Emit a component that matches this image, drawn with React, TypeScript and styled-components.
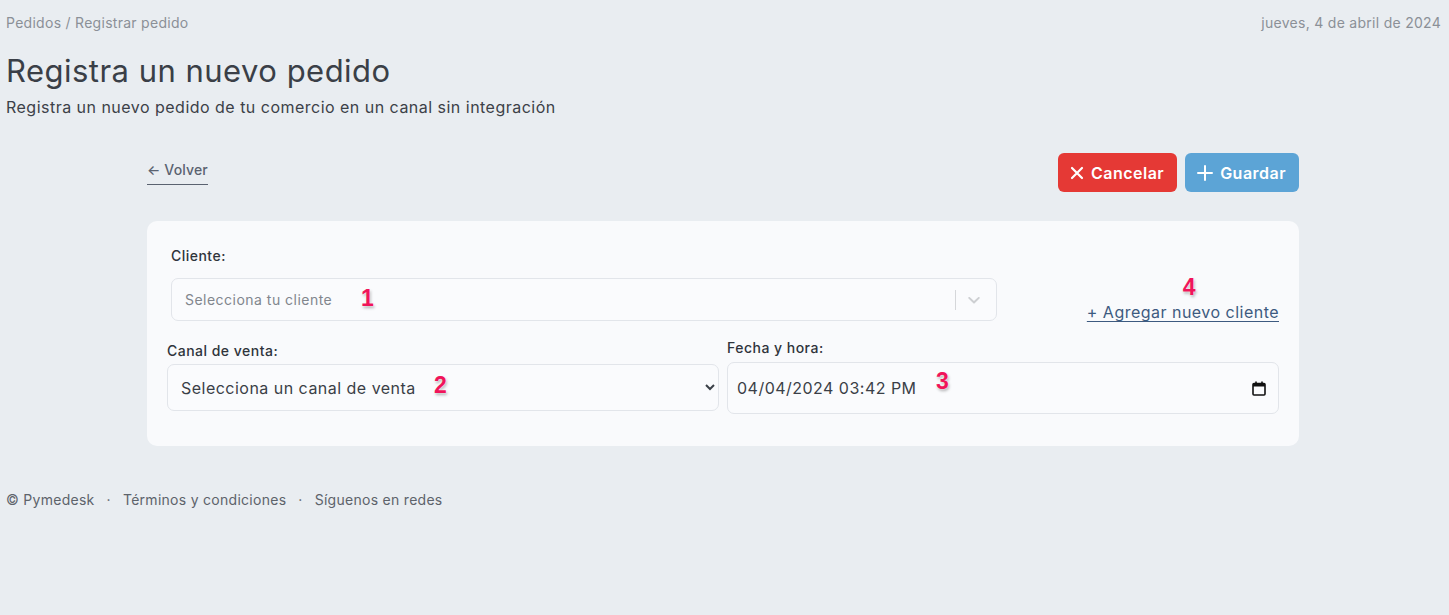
import React from 'react';
import styled, { createGlobalStyle } from 'styled-components';

const GlobalStyle = createGlobalStyle`
  html, body {
    margin: 0;
    padding: 0;
    background: #e9edf1;
    font-family: 'Inter', 'Open Sans', sans-serif;
    letter-spacing: 0.03em;
  }
  * { box-sizing: border-box; }
`;

const Page = styled.div`
  min-height: 615px;
  padding: 14px 8px 0 6px;
`;

const TopBar = styled.div`
  display: flex;
  justify-content: space-between;
  font-size: 14px;
  color: #8b9097;
  line-height: 18px;
  letter-spacing: 0.02em;
`;

const Title = styled.h1`
  margin: 19px 0 0;
  font-size: 31px;
  font-weight: 400;
  color: #3a3f47;
  line-height: 40px;
`;

const Subtitle = styled.p`
  margin: 6px 0 0;
  font-size: 16px;
  color: #3c4148;
  line-height: 20px;
`;

const Content = styled.div`
  width: 1152px;
  margin: 36px 0 0 141px;
`;

const Actions = styled.div`
  display: flex;
  justify-content: space-between;
  align-items: flex-start;
`;

const BackLink = styled.a`
  margin-top: 8px;
  font-size: 14px;
  font-weight: 500;
  color: #5a6270;
  padding-bottom: 5px;
  border-bottom: 1px solid #5a6270;
  text-decoration: none;
  line-height: 18px;
  letter-spacing: 0.01em;
`;

const ButtonGroup = styled.div`
  display: flex;
  gap: 8px;
`;

const Button = styled.button<{ $variant: 'danger' | 'primary' }>`
  display: flex;
  align-items: center;
  gap: 7px;
  height: 39px;
  padding: 0 13px 0 12px;
  border: none;
  border-radius: 6px;
  font-family: inherit;
  letter-spacing: inherit;
  font-size: 16px;
  font-weight: 600;
  color: #fff;
  background: ${p => (p.$variant === 'danger' ? '#e53935' : '#5ca4d6')};
`;

const Card = styled.div`
  margin-top: 29px;
  background: #f9fafc;
  border-radius: 10px;
  padding: 26px 20px 32px;
`;

const ClientRow = styled.div`
  display: flex;
  align-items: flex-end;
  justify-content: space-between;
  padding-left: 4px;
`;

const ClientField = styled.div`
  width: 826px;
`;

const Label = styled.div`
  font-size: 14px;
  font-weight: 500;
  color: #2f343b;
  line-height: 18px;
`;

const Annotated = styled.div`
  position: relative;
`;

const Marker = styled.span<{ $left: number; $top: number }>`
  position: absolute;
  left: ${p => p.$left}px;
  top: ${p => p.$top}px;
  font-family: 'Liberation Sans', Arial, sans-serif;
  font-size: 23px;
  line-height: 23px;
  font-weight: 700;
  letter-spacing: 0;
  color: #f0145a;
  text-shadow: 0 0 2px #fff, 1px 2px 3px rgba(0, 0, 0, 0.3);
  pointer-events: none;
`;

const ClientSelect = styled.div`
  margin-top: 13px;
  height: 43px;
  display: flex;
  align-items: center;
  border: 1px solid #e2e5ea;
  border-radius: 7px;
  background: #fafbfd;
  padding-left: 13px;
`;

const Placeholder = styled.span`
  flex: 1;
  font-size: 14px;
  color: #81868d;
`;

const Separator = styled.span`
  width: 1px;
  height: 20px;
  background: #d5d7da;
`;

const Indicator = styled.span`
  display: flex;
  align-items: center;
  padding: 0 12px 0 8px;
  color: #cdcfd2;
`;

const AddLink = styled.a`
  display: block;
  margin-bottom: -1px;
  font-size: 16px;
  color: #3d5a80;
  text-decoration: underline;
  text-underline-offset: 3px;
  line-height: 20px;
`;

const Grid = styled.div`
  display: grid;
  grid-template-columns: 1fr 1fr;
  gap: 8px;
  margin-top: 18px;
`;

const Field = styled.div<{ $offset: number }>`
  display: flex;
  flex-direction: column;
  margin-top: ${p => p.$offset}px;
`;

const Select = styled.select`
  margin-top: 4px;
  height: 47px;
  width: 100%;
  padding: 0 9px;
  border: 1px solid #e2e5ea;
  border-radius: 7px;
  background: #fafbfd;
  font-family: inherit;
  letter-spacing: inherit;
  font-size: 16px;
  color: #3a3f47;
`;

const DateBox = styled.div`
  margin-top: 5px;
  height: 52px;
  display: flex;
  align-items: center;
  justify-content: space-between;
  padding: 0 12px 0 9px;
  border: 1px solid #e2e5ea;
  border-radius: 7px;
  background: #fafbfd;
  font-size: 16px;
  color: #3a3f47;
`;

const Footer = styled.footer`
  margin-top: 45px;
  display: flex;
  gap: 12px;
  font-size: 14px;
  color: #5d636b;
  letter-spacing: 0.02em;
`;

const Chevron = () => (
  <svg width="20" height="20" viewBox="0 0 20 20" fill="currentColor">
    <path d="M4.5 7.2c.4-.4 1-.4 1.4 0L10 11.1l4.1-3.9c.4-.4 1-.4 1.4 0 .4.4.4 1 0 1.4l-4.8 4.6c-.4.4-1 .4-1.4 0L4.5 8.6c-.4-.4-.4-1 0-1.4z" />
  </svg>
);

const CalendarIcon = () => (
  <svg width="14" height="15" viewBox="0 0 14 15">
    <rect x="1" y="2.5" width="12" height="11.5" rx="1" fill="none" stroke="#111" strokeWidth="1.6" />
    <rect x="1" y="2.5" width="12" height="3" fill="#111" />
    <rect x="3.2" y="0.5" width="1.6" height="3" fill="#111" />
    <rect x="9.2" y="0.5" width="1.6" height="3" fill="#111" />
  </svg>
);

const App: React.FC = () => {
  return (
    <>
      <GlobalStyle />
      <Page>
        <TopBar>
          <span>Pedidos / Registrar pedido</span>
          <span>jueves, 4 de abril de 2024</span>
        </TopBar>
        <Title>Registra un nuevo pedido</Title>
        <Subtitle>Registra un nuevo pedido de tu comercio en un canal sin integración</Subtitle>

        <Content>
          <Actions>
            <BackLink href="#">← Volver</BackLink>
            <ButtonGroup>
              <Button $variant="danger">
                <svg width="14" height="14" viewBox="0 0 14 14" stroke="#fff" strokeWidth="2.2" strokeLinecap="round">
                  <path d="M2 2l10 10M12 2L2 12" />
                </svg>
                Cancelar
              </Button>
              <Button $variant="primary">
                <svg width="16" height="16" viewBox="0 0 16 16" stroke="#fff" strokeWidth="2" strokeLinecap="round">
                  <path d="M8 1v14M1 8h14" />
                </svg>
                Guardar
              </Button>
            </ButtonGroup>
          </Actions>

          <Card>
            <ClientRow>
              <ClientField>
                <Label>Cliente:</Label>
                <Annotated>
                  <ClientSelect>
                    <Placeholder>Selecciona tu cliente</Placeholder>
                    <Separator />
                    <Indicator>
                      <Chevron />
                    </Indicator>
                  </ClientSelect>
                  <Marker $left={190} $top={9}>1</Marker>
                </Annotated>
              </ClientField>
              <Annotated>
                <AddLink href="#">+ Agregar nuevo cliente</AddLink>
                <Marker $left={96} $top={-26}>4</Marker>
              </Annotated>
            </ClientRow>

            <Grid>
              <Field $offset={3}>
                <Label>Canal de venta:</Label>
                <Annotated>
                  <Select defaultValue="">
                    <option value="">Selecciona un canal de venta</option>
                  </Select>
                  <Marker $left={267} $top={14}>2</Marker>
                </Annotated>
              </Field>
              <Field $offset={0}>
                <Label>Fecha y hora:</Label>
                <Annotated>
                  <DateBox>
                    <span>04/04/2024 03:42 PM</span>
                    <CalendarIcon />
                  </DateBox>
                  <Marker $left={209} $top={13}>3</Marker>
                </Annotated>
              </Field>
            </Grid>
          </Card>
        </Content>

        <Footer>
          <span>© Pymedesk</span>
          <span>·</span>
          <span>Términos y condiciones</span>
          <span>·</span>
          <span>Síguenos en redes</span>
        </Footer>
      </Page>
    </>
  );
};

export default App;
